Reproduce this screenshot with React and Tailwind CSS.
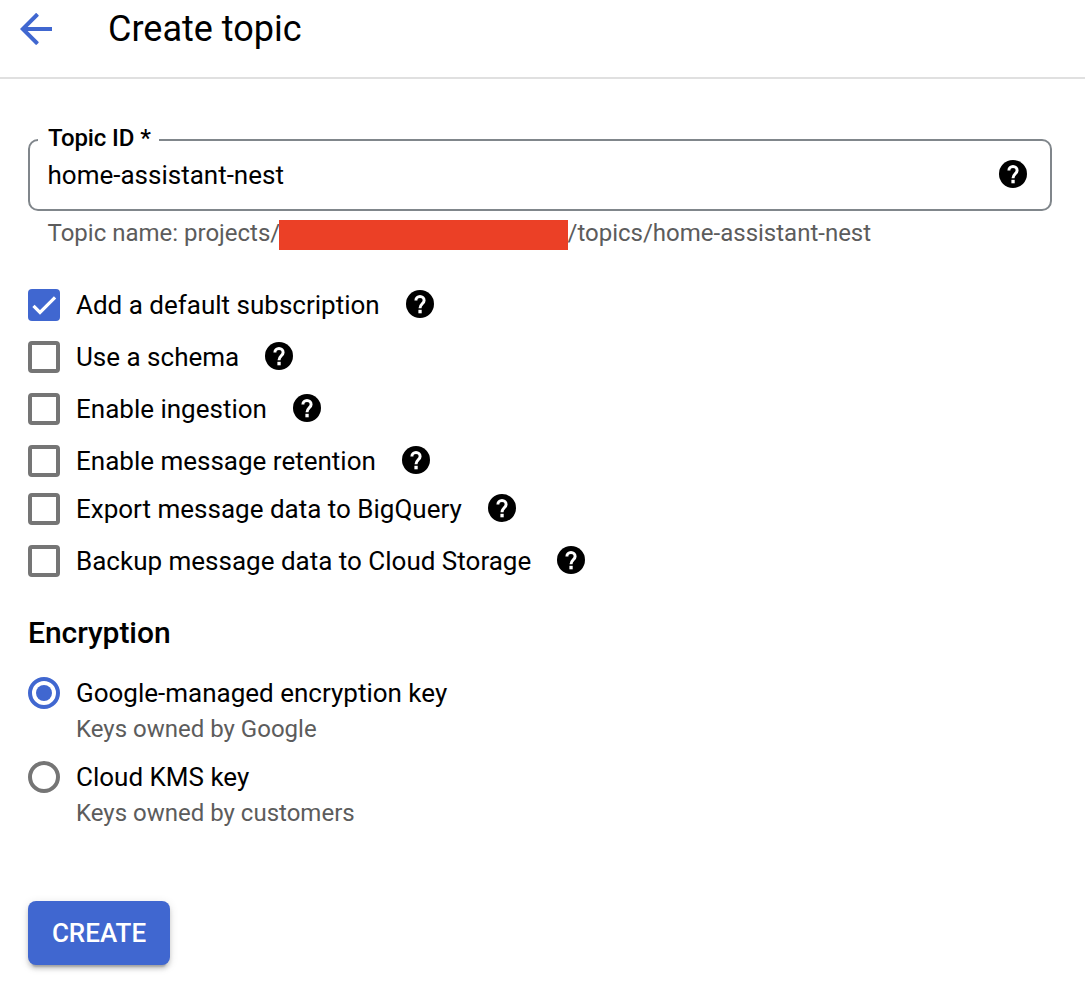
import React, { useState } from "react";

function BackIcon() {
  return (
    <svg className="size-12 shrink-0" viewBox="0 0 24 24" fill="#4067d0" aria-hidden="true">
      <path d="M20 11H7.83l5.4-5.4c.2-.2.2-.4 0-.6l-.8-.8c-.2-.2-.5-.2-.7 0L4 12l7.73 7.8c.2.2.5.2.7 0l.8-.8c.2-.2.2-.4 0-.6L7.83 13H20v-2z" />
    </svg>
  );
}

function HelpIcon() {
  return (
    <svg className="size-7 shrink-0" viewBox="0 0 28 28" fill="none" aria-hidden="true">
      <circle cx="14" cy="14" r="14" fill="#000" />
      <path
        d="M9.9 10.4a4.1 3.9 0 0 1 8.2 0c0 3.3-4.1 3.6-4.1 7.8"
        stroke="#fff"
        strokeWidth="3"
      />
      <rect x="12.4" y="19.8" width="3.3" height="3.5" fill="#fff" />
    </svg>
  );
}

function Checkbox({ checked, onChange }) {
  return (
    <button
      type="button"
      role="checkbox"
      aria-checked={checked}
      onClick={onChange}
      className={
        checked
          ? "size-8 shrink-0 rounded-[4px] bg-[#4067d0]"
          : "size-8 shrink-0 rounded-[4px] border-4 border-[#757575] bg-white"
      }
    >
      {checked && (
        <svg className="size-8" viewBox="0 0 24 24" fill="none" aria-hidden="true">
          <path d="M4.1 12.7 9 17.6 20.3 6.3" stroke="#fff" strokeWidth="2.4" />
        </svg>
      )}
    </button>
  );
}

function Radio({ checked, onChange }) {
  return (
    <button
      type="button"
      role="radio"
      aria-checked={checked}
      onClick={onChange}
      className={
        checked
          ? "flex size-8 shrink-0 items-center justify-center rounded-full border-4 border-[#4067d0]"
          : "size-8 shrink-0 rounded-full border-4 border-[#757575]"
      }
    >
      {checked && <span className="size-4 rounded-full bg-[#4067d0]" />}
    </button>
  );
}

const OPTIONS = [
  { label: "Add a default subscription", row: "mt-0" },
  { label: "Use a schema", row: "mt-5" },
  { label: "Enable ingestion", row: "mt-5" },
  { label: "Enable message retention", row: "mt-5" },
  { label: "Export message data to BigQuery", row: "mt-4" },
  { label: "Backup message data to Cloud Storage", row: "mt-5" },
];

const KEYS = [
  { label: "Google-managed encryption key", hint: "Keys owned by Google" },
  { label: "Cloud KMS key", hint: "Keys owned by customers" },
];

export default function App() {
  const [enabled, setEnabled] = useState([true, false, false, false, false, false]);
  const [selectedKey, setSelectedKey] = useState(0);

  return (
    <div className="min-h-[1002px] bg-white font-['Roboto',sans-serif] text-[26px] leading-8 text-black">
      <header className="flex h-[79px] items-start gap-12 border-b-2 border-[#e0e0e0] pt-[5px] pl-3">
        <BackIcon />
        <h1 className="text-[36px] leading-[48px]">Create topic</h1>
      </header>

      <main className="pt-[60px] pr-[33px] pl-7">
        <div className="relative flex h-[72px] items-center justify-between rounded-[10px] border-2 border-[#80868b] pr-[23px] pl-[17.5px]">
          <label className="absolute -top-[15px] left-2 w-[121px] bg-white pl-[10px] text-[24px] leading-6 font-medium tracking-[-0.1px] whitespace-nowrap">
            Topic ID *
          </label>
          <span>home-assistant-nest</span>
          <span className="-mt-0.5">
            <HelpIcon />
          </span>
        </div>

        <div className="mt-[9px] flex h-[30px] items-start pl-[19.5px] text-[24px] leading-[26px] text-[#5c5c5c]">
          <span className="w-[231.5px] whitespace-nowrap">Topic name: projects/</span>
          <span className="z-10 h-[30px] w-[289px] bg-[#eb4026]" />
          <span className="-ml-[0.5px]">/topics/home-assistant-nest</span>
        </div>

        <div className="mt-[39px]">
          {OPTIONS.map(({ label, row }, i) => (
            <div key={label} className={`flex h-8 items-center ${row}`}>
              <Checkbox
                checked={enabled[i]}
                onChange={() => setEnabled(enabled.map((v, j) => (j === i ? !v : v)))}
              />
              <span className="ml-4">{label}</span>
              <span className="mb-0.5 ml-[26px]">
                <HelpIcon />
              </span>
            </div>
          ))}
        </div>

        <h2 className="mt-9 text-[30px] leading-10 font-medium tracking-[-0.05px]">Encryption</h2>

        <div className="mt-6 flex flex-col gap-4" role="radiogroup">
          {KEYS.map(({ label, hint }, i) => (
            <div key={label} className="flex items-start gap-4">
              <Radio checked={selectedKey === i} onChange={() => setSelectedKey(i)} />
              <div>
                <div>{label}</div>
                <div className="pt-1 text-[24px] leading-8 text-[#5c5c5c]">{hint}</div>
              </div>
            </div>
          ))}
        </div>

        <button
          type="button"
          className="mt-[72px] flex h-16 w-[142px] items-center justify-center rounded-lg bg-[#4067d0] font-medium text-white shadow-[0_6px_2px_-4px_rgba(0,0,0,0.2),0_4px_4px_0_rgba(0,0,0,0.14),0_2px_10px_0_rgba(0,0,0,0.12)]"
        >
          CREATE
        </button>
      </main>
    </div>
  );
}
